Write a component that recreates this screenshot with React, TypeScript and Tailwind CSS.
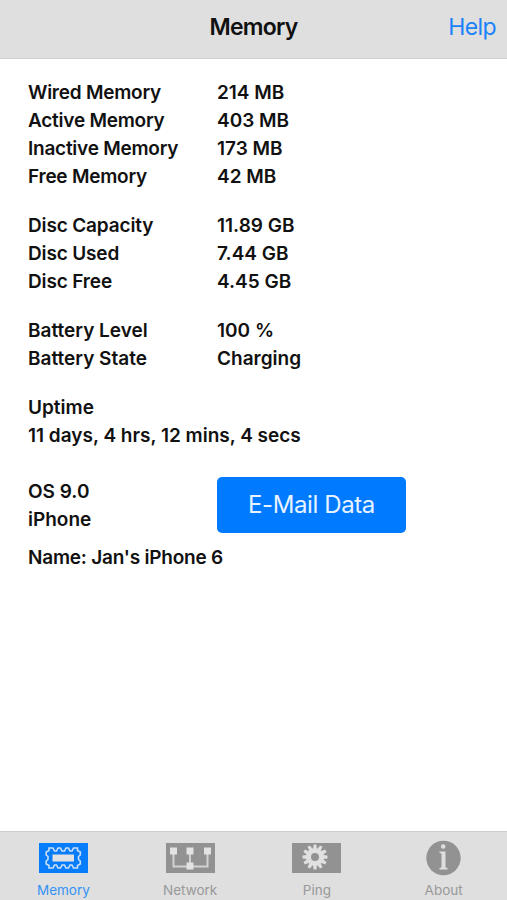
import React from 'react';
import clsx from 'clsx';

type Row = { label: string; value: string };

const memoryRows: Row[] = [
  { label: 'Wired Memory', value: '214 MB' },
  { label: 'Active Memory', value: '403 MB' },
  { label: 'Inactive Memory', value: '173 MB' },
  { label: 'Free Memory', value: '42 MB' },
];

const discRows: Row[] = [
  { label: 'Disc Capacity', value: '11.89 GB' },
  { label: 'Disc Used', value: '7.44 GB' },
  { label: 'Disc Free', value: '4.45 GB' },
];

const batteryRows: Row[] = [
  { label: 'Battery Level', value: '100 %' },
  { label: 'Battery State', value: 'Charging' },
];

function RowGroup({ rows, labelClass }: { rows: Row[]; labelClass?: string }) {
  return (
    <dl className="grid grid-cols-[189px_1fr]">
      {rows.map((row) => (
        <React.Fragment key={row.label}>
          <dt className={labelClass}>{row.label}</dt>
          <dd>{row.value}</dd>
        </React.Fragment>
      ))}
    </dl>
  );
}

function MemoryIcon() {
  return (
    <svg width="49" height="30" viewBox="0 0 49 30">
      <rect width="49" height="30" fill="#087dfb" />
      <path
        d="M10 5H14L15.500 8H17.500L19 5H21.500L23 8H25.500L27 5H29.500L31 8H33L34.500 5H38.500V7.500L41.300 9V12L39.500 13.500V16.500L41.300 18V21L38.500 22.500V25H34.500L33 22H31L29.500 25H27L25.500 22H23L21.500 25H19L17.500 22H15.500L14 25H10V22.500L7.200 21V18L9 16.500V13.500L7.200 12V9L10 7.500z"
        fill="none"
        stroke="#c9dff5"
        strokeWidth="1.600"
      />
      <rect x="13.500" y="11.500" width="21.500" height="7" fill="#dfe1e3" />
    </svg>
  );
}

function NetworkIcon() {
  return (
    <svg width="49" height="30" viewBox="0 0 49 30">
      <rect width="49" height="30" fill="#929292" />
      <path d="M7.500 8v15.500H41.500V8M24 8v15" fill="none" stroke="#d2d2d2" strokeWidth="2" />
      <g fill="#e2e2e2">
        <rect x="4" y="4.500" width="7" height="7" />
        <rect x="20.500" y="4.500" width="7" height="7" />
        <rect x="38" y="4.500" width="7" height="7" />
        <rect x="20.500" y="19.500" width="7" height="7" />
      </g>
    </svg>
  );
}

const gearTeeth = [0, 30, 60, 90, 120, 150, 180, 210, 240, 270, 300, 330];

function PingIcon() {
  return (
    <svg width="49" height="30" viewBox="0 0 49 30">
      <rect width="49" height="30" fill="#929292" />
      <g transform="translate(23 14)">
        <circle r="6.500" fill="none" stroke="#e0e0e0" strokeWidth="5" />
        {gearTeeth.map((angle) => (
          <path key={angle} d="M-1.900-8L-1.400-12.500H1.400L1.900-8z" fill="#e0e0e0" transform={`rotate(${angle})`} />
        ))}
      </g>
    </svg>
  );
}

function AboutIcon() {
  return (
    <svg width="49" height="36" viewBox="0 0 49 36">
      <circle cx="24.500" cy="18" r="17.200" fill="#929292" />
      <circle cx="24.200" cy="6.500" r="2.300" fill="#dedede" />
      <path d="M20.500 11.500h6V27.500l2 .500V29.500H20.500V28l2-.500V13.500l-2-.500z" fill="#dedede" />
    </svg>
  );
}

const tabs = [
  { name: 'Memory', icon: <MemoryIcon />, active: true },
  { name: 'Network', icon: <NetworkIcon />, active: false },
  { name: 'Ping', icon: <PingIcon />, active: false },
  { name: 'About', icon: <AboutIcon />, active: false },
];

export default function App() {
  return (
    <div className="flex h-[900px] w-[507px] flex-col bg-white font-['Inter',sans-serif] text-[#111]">
      <header className="grid h-[59px] shrink-0 grid-cols-[1fr_auto_1fr] items-center border-b border-[#cfcfcf] bg-[#dfdfdf] pb-1">
        <h1 className="col-start-2 text-[23px] font-semibold tracking-[-0.8px]">Memory</h1>
        <button className="justify-self-end pr-[11px] text-[23px] tracking-[-0.6px] text-[#1a82fb]">Help</button>
      </header>

      <main className="flex-1 pt-5 pl-7 text-[19px] leading-7 font-semibold">
        <div className="flex flex-col gap-[21px]">
          <RowGroup rows={memoryRows} labelClass="tracking-[-0.24px]" />
          <RowGroup rows={discRows} labelClass="tracking-[-0.15px]" />
          <RowGroup rows={batteryRows} />
          <div>
            <p>Uptime</p>
            <p>11 days, 4 hrs, 12 mins, 4 secs</p>
          </div>
        </div>

        <div className="mt-7 grid grid-cols-[189px_189px]">
          <div>
            <p>OS 9.0</p>
            <p>iPhone</p>
          </div>
          <button className="-mt-px h-14 rounded-[5px] bg-[#007aff] text-[24px] font-normal tracking-[-0.4px] text-[#e8f3ff]">
            E-Mail Data
          </button>
        </div>
        <p className="mt-2.5 tracking-[-0.22px]">Name: Jan&apos;s iPhone 6</p>
      </main>

      <nav className="grid h-[69px] shrink-0 grid-cols-4 border-t border-[#cdcdcd] bg-[#dfdfdf]">
        {tabs.map((tab) => (
          <button
            key={tab.name}
            className={clsx('flex flex-col items-center pt-2', tab.active ? 'text-[#3592f5]' : 'text-[#999]')}
          >
            <span className="flex h-9 items-center">{tab.icon}</span>
            <span className="mt-1 text-[13.500px] leading-5">{tab.name}</span>
          </button>
        ))}
      </nav>
    </div>
  );
}
